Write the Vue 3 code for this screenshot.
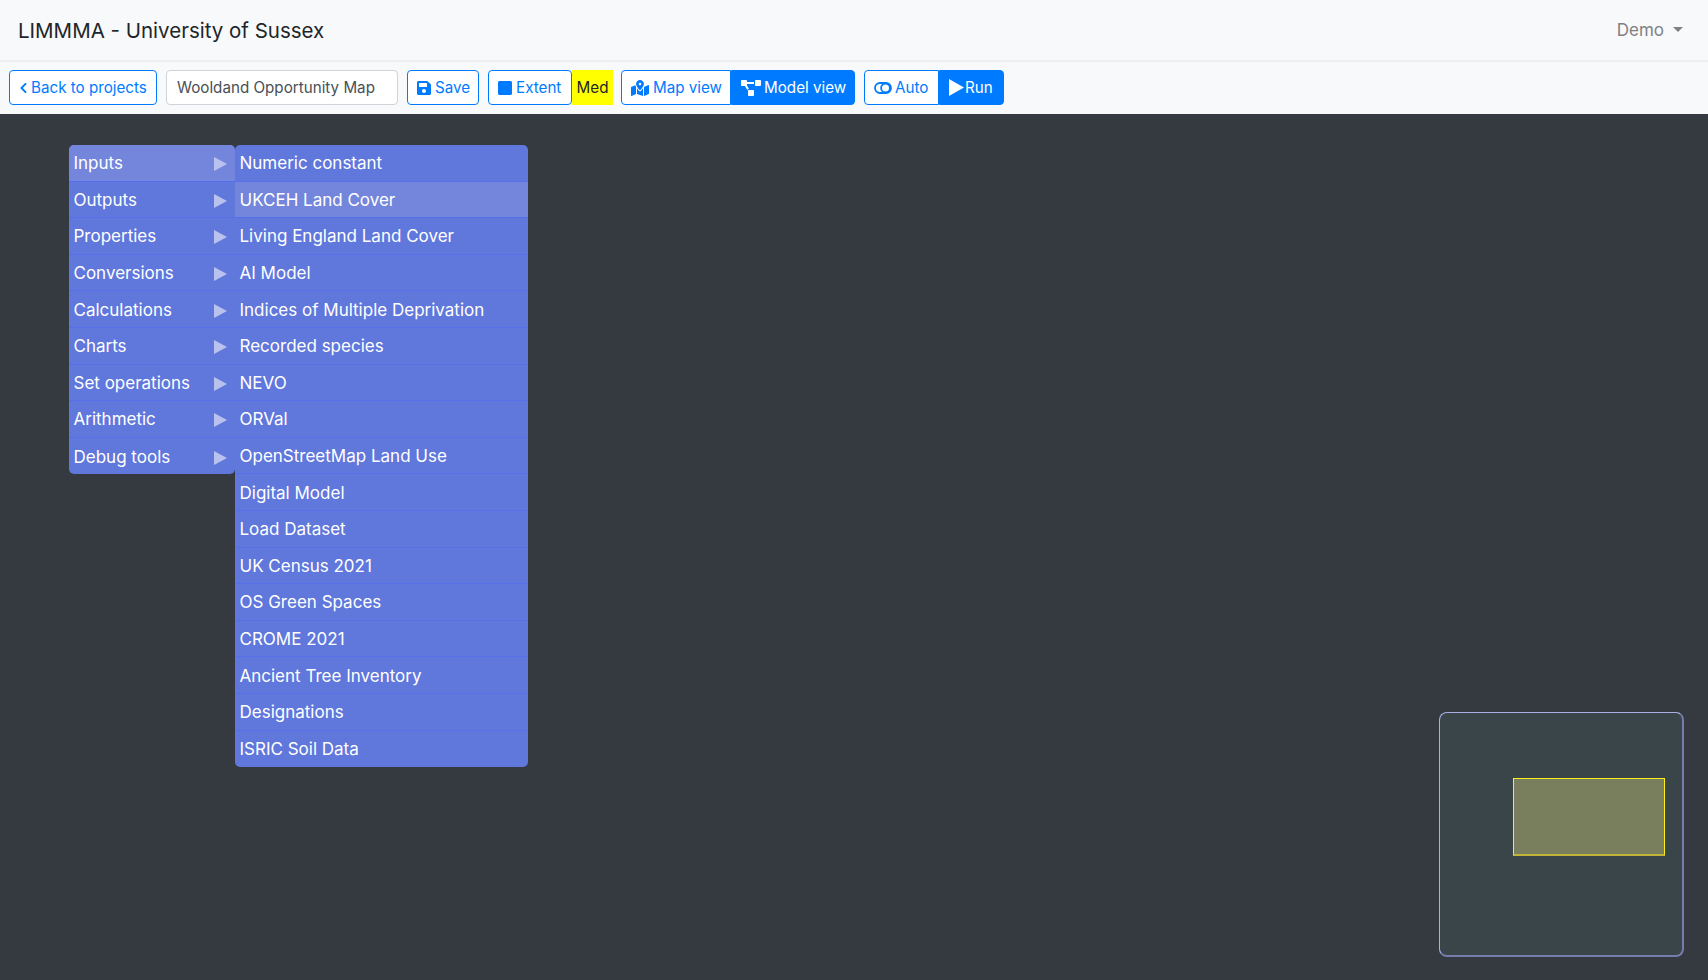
<script setup>
const inputs = ['Inputs','Outputs','Properties','Conversions','Calculations','Charts','Set operations','Arithmetic','Debug tools']
const subs = ['Numeric constant','UKCEH Land Cover','Living England Land Cover','AI Model','Indices of Multiple Deprivation','Recorded species','NEVO','ORVal','OpenStreetMap Land Use','Digital Model','Load Dataset','UK Census 2021','OS Green Spaces','CROME 2021','Ancient Tree Inventory','Designations','ISRIC Soil Data']
</script>

<template>
  <div class="page">
    <nav class="navbar">
      <span class="brand">LIMMMA - University of Sussex</span>
      <span class="user">Demo<i class="caret"></i></span>
    </nav>
    <div class="toolbar">
      <button class="btn back">
        <svg class="ic chev" viewBox="0 0 320 512"><path d="M34.52 239.03L228.87 44.69c9.37-9.37 24.57-9.37 33.94 0l22.67 22.67c9.36 9.36 9.37 24.52.04 33.9L131.49 256l154.02 154.75c9.34 9.38 9.32 24.54-.04 33.9l-22.67 22.67c-9.37 9.37-24.57 9.37-33.94 0L34.52 272.97c-9.37-9.37-9.37-24.57 0-33.94z"/></svg>
        Back to projects
      </button>
      <input class="name" value="Wooldand Opportunity Map" />
      <button class="btn save">
        <svg class="ic" viewBox="0 0 448 512"><path d="M433.941 129.941l-83.882-83.882A48 48 0 0 0 316.118 32H48C21.49 32 0 53.49 0 80v352c0 26.51 21.49 48 48 48h352c26.51 0 48-21.49 48-48V163.882a48 48 0 0 0-14.059-33.941zM224 416c-35.346 0-64-28.654-64-64 0-35.346 28.654-64 64-64s64 28.654 64 64c0 35.346-28.654 64-64 64zm96-304.52V212c0 6.627-5.373 12-12 12H76c-6.627 0-12-5.373-12-12V108c0-6.627 5.373-12 12-12h228.52c3.183 0 6.235 1.264 8.485 3.515l3.48 3.48A11.996 11.996 0 0 1 320 111.48z"/></svg>
        Save
      </button>
      <div class="group extent">
        <button class="btn">
          <svg class="ic" viewBox="0 0 448 512"><path d="M400 32H48C21.5 32 0 53.5 0 80v352c0 26.500 21.500 48 48 48h352c26.500 0 48-21.500 48-48V80c0-26.500-21.500-48-48-48z"/></svg>
          Extent
        </button>
        <span class="med">Med</span>
      </div>
      <div class="group">
        <button class="btn first map">
          <svg class="ic wide" viewBox="0 0 576 512"><path d="M288 0c-69.59 0-126 56.41-126 126 0 56.26 82.35 158.8 113.9 196.02 6.39 7.54 17.82 7.54 24.2 0C331.65 284.8 414 182.26 414 126 414 56.41 357.59 0 288 0zm0 168c-23.2 0-42-18.8-42-42s18.8-42 42-42 42 18.8 42 42-18.8 42-42 42zM20.12 215.95A32.006 32.006 0 0 0 0 245.66v250.32c0 11.32 11.43 19.06 21.94 14.86L160 448V214.92c-8.84-15.98-16.07-31.54-21.25-46.42L20.12 215.95zM288 359.67c-14.07 0-27.38-6.18-36.51-16.96-19.66-23.2-40.57-49.62-59.49-76.72V448l192 64V265.99c-18.92 27.09-39.82 53.52-59.49 76.72-9.13 10.77-22.44 16.96-36.51 16.96zm266.06-198.51L416 224v288l139.88-55.95A31.996 31.996 0 0 0 576 426.34V176.02c0-11.32-11.43-19.06-21.94-14.86z"/></svg>
          Map view
        </button>
        <button class="btn last active model">
          <svg class="ic wider" viewBox="0 0 640 512"><path d="M384 320H256c-17.67 0-32 14.33-32 32v128c0 17.67 14.33 32 32 32h128c17.67 0 32-14.33 32-32V352c0-17.67-14.33-32-32-32zM192 32c0-17.67-14.33-32-32-32H32C14.33 0 0 14.33 0 32v128c0 17.67 14.33 32 32 32h95.72l73.16 128.04C211.98 300.98 232.4 288 256 288h.28L192 175.51V128h224V64H192V32zM608 0H480c-17.67 0-32 14.33-32 32v128c0 17.67 14.33 32 32 32h128c17.67 0 32-14.33 32-32V32c0-17.67-14.33-32-32-32z"/></svg>
          Model view
        </button>
      </div>
      <div class="group">
        <button class="btn first auto">
          <svg class="ic wide" viewBox="0 0 18 16" fill="none"><rect x="1" y="3" width="16" height="10" rx="5" fill="none" stroke="currentColor" stroke-width="1.8"/><circle cx="11.500" cy="8" r="4.400" fill="none" stroke="currentColor" stroke-width="1.8"/></svg>
          Auto
        </button>
        <button class="btn last active run">
          <svg class="ic play" viewBox="0 0 15 17"><path d="M0 0L15 8.500 0 17z"/></svg>
          Run
        </button>
      </div>
    </div>
    <main class="canvas">
      <ul class="menu main">
        <li v-for="(item, i) in inputs" :key="item" :class="{ hover: i === 0 }">
          <span>{{ item }}</span><i class="arrow"></i>
        </li>
      </ul>
      <ul class="menu sub">
        <li v-for="(item, i) in subs" :key="item" :class="{ hover: i === 1 }">{{ item }}</li>
      </ul>
      <div class="minimap"><div class="viewport"></div></div>
    </main>
  </div>
</template>

<style>
html, body { margin: 0; padding: 0; }
</style>

<style scoped>
.page {
  width: 1708px;
  height: 980px;
  display: flex;
  flex-direction: column;
  overflow: hidden;
  font-family: Inter, "Liberation Sans", sans-serif;
  font-size: 16px;
}
.navbar {
  height: 62px;
  box-sizing: border-box;
  background: #f8f9fa;
  border-bottom: 2px solid #eceef0;
  display: flex;
  align-items: center;
  justify-content: space-between;
  padding: 0 25px 0 18px;
}
.brand {
  font-size: 20.500px;
  color: #212529;
}
.user {
  color: #7f8184;
  font-size: 17px;
  display: flex;
  align-items: center;
}
.caret {
  margin-left: 9px;
  margin-top: -2px;
  border-top: 5px solid #7f8184;
  border-left: 5px solid transparent;
  border-right: 5px solid transparent;
}
.toolbar {
  height: 52px;
  box-sizing: border-box;
  background: #f8f9fa;
  display: flex;
  align-items: center;
  padding: 0 0 1px 9px;
  gap: 9px;
}
.btn {
  height: 35px;
  box-sizing: border-box;
  border: 1px solid #007bff;
  border-radius: 4px;
  background: #fff;
  color: #007bff;
  font: inherit;
  font-size: 15.200px;
  padding: 0 9px;
  display: inline-flex;
  align-items: center;
  gap: 4px;
  white-space: nowrap;
}
.back { width: 148px; gap: 3px; }
.save { width: 72px; }
.name {
  width: 232px;
  height: 35px;
  box-sizing: border-box;
  border: 1px solid #ced4da;
  border-radius: 4px;
  padding: 0 10px;
  font: inherit;
  font-size: 15.200px;
  color: #495057;
  background: #fff;
  outline: none;
}
.group { display: flex; }
.extent { margin-right: -1px; }
.extent .btn { width: 84px; }
.med {
  width: 41px;
  height: 35px;
  background: #ffff00;
  color: #212529;
  font-size: 15.200px;
  display: flex;
  align-items: center;
  justify-content: center;
}
.first { border-radius: 4px 0 0 4px; }
.last { border-radius: 0 4px 4px 0; }
.active { background: #007bff; color: #fff; }
.map { width: 110px; }
.model { width: 124px; gap: 3px; }
.auto { width: 75px; gap: 3px; }
.run { width: 65px; gap: 1px; }
.ic { width: 14px; height: 16px; fill: currentColor; flex: none; }
.chev { width: 9px; height: 12px; }
.wide { width: 18px; }
.wider { width: 20px; }
.play { width: 15px; height: 17px; }
.canvas {
  position: relative;
  flex: 1;
  background: #343a40;
}
.menu {
  position: absolute;
  margin: 0;
  padding: 0;
  list-style: none;
  background: #6077dc;
  color: #fff;
  border-radius: 5px;
  overflow: hidden;
  font-size: 17px;
}
.menu li {
  height: 36.600px;
  box-sizing: border-box;
  padding: 1px 0 0 4.500px;
  border-bottom: 1px solid #5570ea;
  display: flex;
  align-items: center;
  white-space: nowrap;
}
.menu li:last-child { border-bottom: 0; }
.hover { background: #7386dc; }
.main { left: 69px; top: 31px; width: 166px; }
.main li { justify-content: space-between; padding-right: 8px; }
.sub { left: 235px; top: 31px; width: 293px; }
.arrow {
  margin-top: 2px;
  border-left: 13px solid #b9c2ee;
  border-top: 7px solid transparent;
  border-bottom: 7px solid transparent;
}
.minimap {
  position: absolute;
  left: 1439px;
  top: 598px;
  width: 245px;
  height: 245px;
  box-sizing: border-box;
  border: 1px solid #a9b0e8;
  border-right: 2px solid #767cab;
  border-bottom: 2px solid #767cab;
  border-radius: 8px;
  background: #3a454a;
}
.viewport {
  position: absolute;
  left: 73px;
  top: 65px;
  width: 152px;
  height: 78px;
  box-sizing: border-box;
  border: 1px solid #fff01a;
  border-bottom: 2px solid #bfb33a;
  background: #797f5c;
}
</style>
